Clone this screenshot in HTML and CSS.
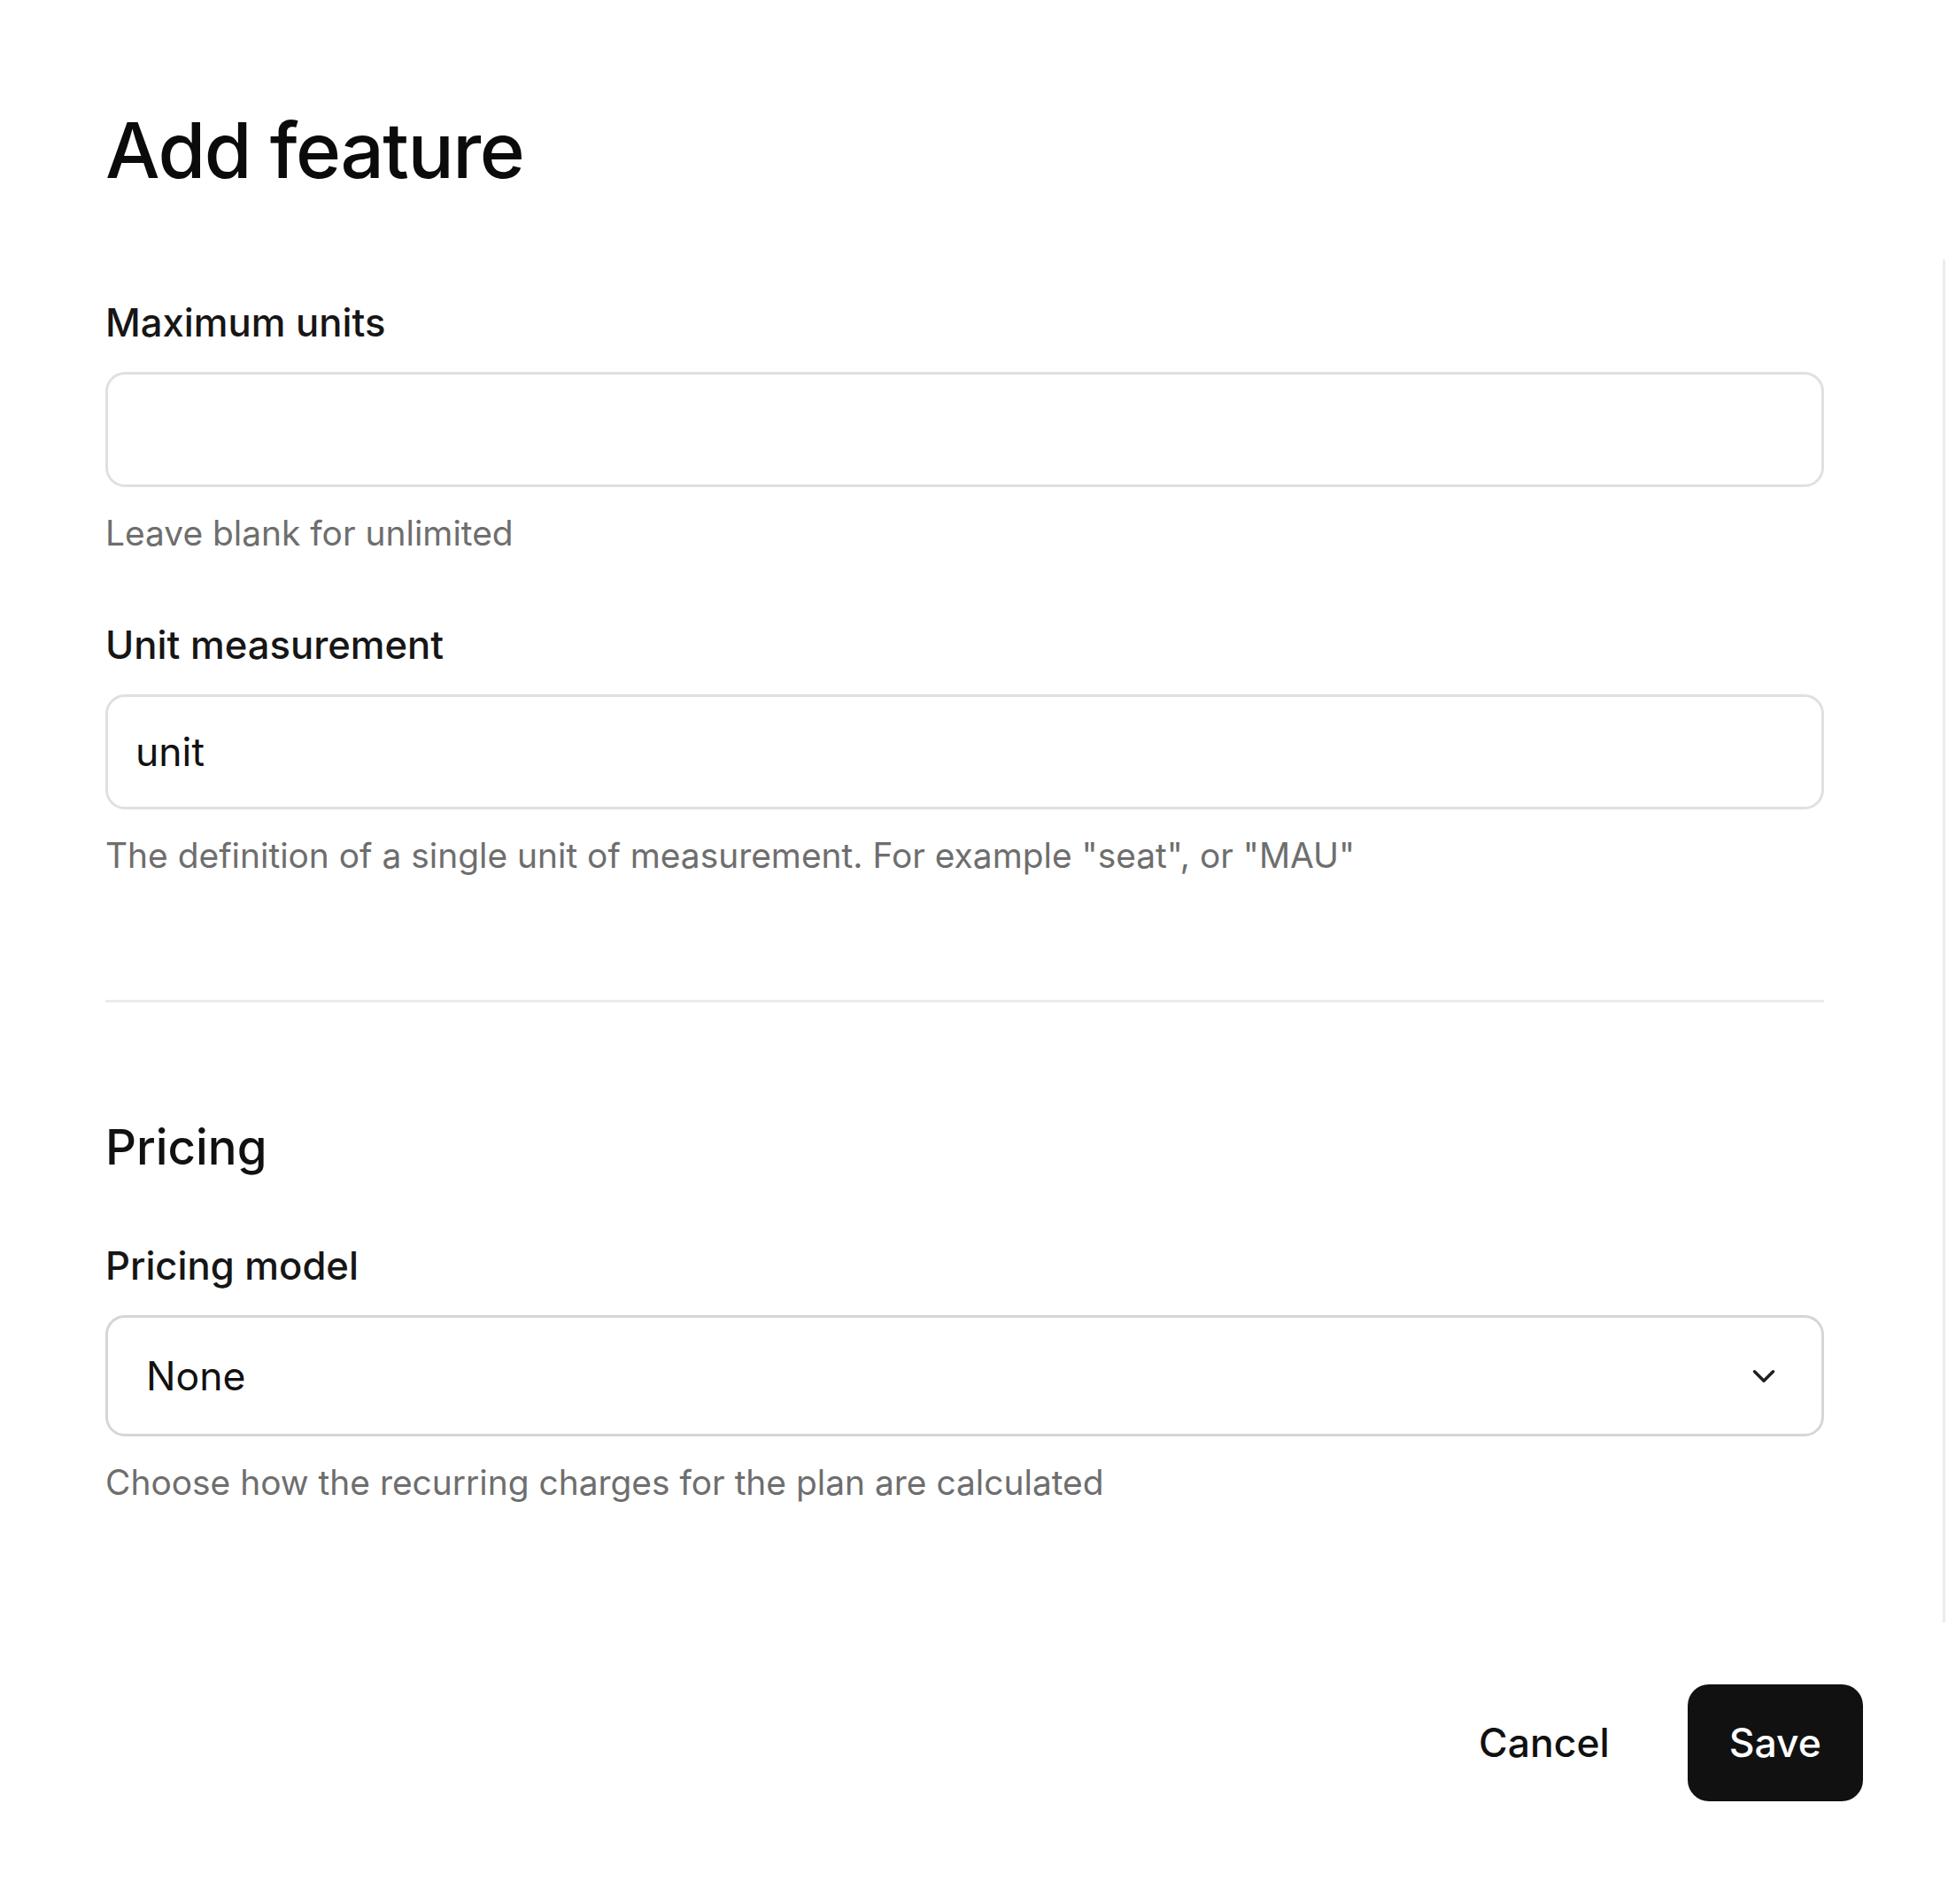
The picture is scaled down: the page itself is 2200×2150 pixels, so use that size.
FILE: index.html
```html
<!DOCTYPE html>
<html lang="en">
<head>
    <meta charset="UTF-8">
    <meta name="viewport" content="width=device-width, initial-scale=1.0">
    <title>Add feature</title>
    <link rel="stylesheet" href="styles.css">
</head>
<body>
    <div class="modal">
        <header class="modal-header">
            <h1>Add feature</h1>
        </header>

        <div class="modal-body">
            <div class="field">
                <label for="maxUnits">Maximum units</label>
                <input type="text" id="maxUnits" class="input">
                <p class="hint">Leave blank for unlimited</p>
            </div>

            <div class="field field-gap">
                <label for="unitName">Unit measurement</label>
                <input type="text" id="unitName" class="input" value="unit">
                <p class="hint">The definition of a single unit of measurement. For example "seat", or "MAU"</p>
            </div>

            <hr class="divider">

            <h2>Pricing</h2>

            <div class="field">
                <label for="pricingModel">Pricing model</label>
                <div class="select" id="pricingModel">
                    <span>None</span>
                    <svg class="chevron" viewBox="0 0 24 24" fill="none" stroke="currentColor" stroke-linecap="round" stroke-linejoin="round"><path d="m6 9 6 6 6-6"/></svg>
                </div>
                <p class="hint">Choose how the recurring charges for the plan are calculated</p>
            </div>
        </div>

        <footer class="modal-footer">
            <button type="button" class="btn btn-ghost">Cancel</button>
            <button type="submit" class="btn btn-dark">Save</button>
        </footer>
    </div>
</body>
</html>
```

FILE: styles.css
```css
* {
    margin: 0;
    padding: 0;
    box-sizing: border-box;
    font-family: "Inter", "Noto Sans", sans-serif;
}

body {
    background: #fff;
    color: #111;
    width: 2200px;
    min-height: 2150px;
}

.modal-header {
    padding: 116px 119px 69px;
}

.modal-header h1 {
    font-size: 87px;
    line-height: 108px;
    font-weight: 500;
    letter-spacing: -1.5px;
    color: #0b0b0b;
}

.modal-body {
    margin-right: 3px;
    border-right: 3px solid #ececec;
    padding: 36px 134px 130px 119px;
}

.field {
    display: flex;
    flex-direction: column;
    gap: 21px;
}

.field-gap {
    margin-top: 64px;
}

.field label {
    padding-top: 3px;
    font-size: 43.6px;
    line-height: 66.75px;
    font-weight: 500;
    color: #161616;
}

.input {
    width: 100%;
    height: 130px;
    border: 3px solid #e0e0e0;
    border-radius: 22px;
    padding: 0 31px;
    font-size: 44.5px;
    color: #111;
    outline: none;
    background: #fff;
}

.hint {
    margin-top: 3px;
    font-size: 38.9px;
    line-height: 55.6px;
    color: #6e6e6e;
}

.divider {
    border: none;
    border-top: 3px solid #ebebeb;
    margin: 135px 0 125px;
}

.modal-body h2 {
    font-size: 54.6px;
    line-height: 77.8px;
    font-weight: 500;
    color: #111;
    margin-bottom: 60px;
}

.select {
    display: flex;
    align-items: center;
    justify-content: space-between;
    height: 137px;
    border: 3px solid #d6d6d6;
    border-radius: 22px;
    padding: 0 44px 0 43px;
    font-size: 44.5px;
    color: #111;
}

.chevron {
    width: 42px;
    height: 42px;
    stroke-width: 2;
    color: #1f1f1f;
}

.modal-footer {
    display: flex;
    justify-content: flex-end;
    gap: 41px;
    padding: 70px 96px 0 0;
}

.btn {
    height: 132px;
    padding: 0 47px;
    border: none;
    border-radius: 24px;
    font-size: 44.5px;
    font-weight: 500;
    cursor: pointer;
}

.btn-ghost {
    background: transparent;
    color: #111;
}

.btn-dark {
    background: #111;
    color: #fff;
}
```
